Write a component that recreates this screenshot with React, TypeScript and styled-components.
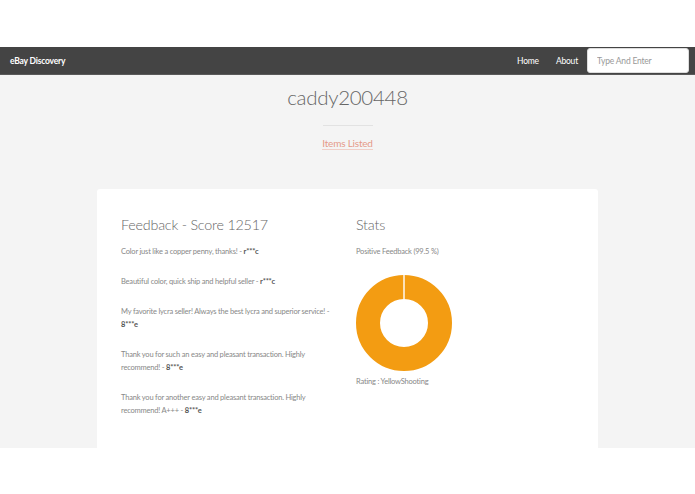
import React from "react";
import styled, { createGlobalStyle } from "styled-components";

const Global = createGlobalStyle`
  html, body { margin: 0; padding: 0; background: #ffffff; }
  body { font-family: "Lato", "Open Sans", sans-serif; color: #777; }
  * { box-sizing: border-box; }
`;

const Page = styled.div`
  padding-top: 47px;
  width: 695px;
`;

const NavBar = styled.nav`
  height: 28px;
  background: #444444;
  border-bottom: 1px solid #5a5a5a;
  display: flex;
  align-items: center;
  padding: 0 6px 0 10px;
`;

const Brand = styled.a`
  color: #ffffff;
  font-weight: 700;
  font-size: 8.5px;
  letter-spacing: -0.2px;
  flex: 1;
`;

const NavLink = styled.a<{ $gap: number }>`
  color: #ffffff;
  font-size: 8.5px;
  letter-spacing: -0.2px;
  margin-right: ${(p) => p.$gap}px;
`;

const Search = styled.input`
  width: 102px;
  height: 25px;
  border: 1px solid #dddddd;
  border-radius: 3px;
  background: #ffffff;
  padding: 0 9px;
  font-family: "Lato", sans-serif;
  font-size: 8.5px;
  letter-spacing: -0.2px;
  color: #555;
  outline: none;
  &::placeholder { color: #999999; }
`;

const Main = styled.main`
  background: #f4f4f4;
  height: 373px;
  overflow: hidden;
  display: flex;
  flex-direction: column;
  align-items: center;
`;

const Title = styled.h1`
  margin: 10px 0 0;
  font-size: 20.5px;
  font-weight: 300;
  color: #666666;
  letter-spacing: -0.3px;
  line-height: 25px;
`;

const Rule = styled.hr`
  width: 50px;
  border: 0;
  border-top: 1px solid #e2e2e2;
  margin: 15px 0 0;
`;

const ItemsLink = styled.a`
  margin-top: 11px;
  font-size: 10px;
  color: #e59a88;
  letter-spacing: -0.2px;
  border-bottom: 1px solid #f0cfc7;
  line-height: 12px;
`;

const Card = styled.section`
  margin-top: 39px;
  width: 501px;
  min-height: 320px;
  background: #ffffff;
  border-radius: 3px;
  padding: 27px 24px 0;
  display: grid;
  grid-template-columns: 235px 1fr;
`;

const Heading = styled.h2`
  margin: 0 0 11px;
  font-size: 14.3px;
  font-weight: 300;
  color: #666666;
  letter-spacing: -0.2px;
  line-height: 18px;
`;

const Column = styled.div`
  display: flex;
  flex-direction: column;
`;

const Feedback = styled.p`
  margin: 0 0 17px;
  width: 220px;
  font-size: 7.5px;
  line-height: 13px;
  color: #888888;
  letter-spacing: -0.2px;
`;

const User = styled.b`
  color: #555555;
  font-weight: 700;
`;

const Small = styled.p`
  margin: 0;
  font-size: 7.5px;
  line-height: 13px;
  color: #888888;
  letter-spacing: -0.2px;
`;

const Chart = styled.svg`
  display: block;
  margin: 17px 0 3px;
`;

const feedback = [
  ["Color just like a copper penny, thanks!", "r***c"],
  ["Beautiful color, quick ship and helpful seller", "r***c"],
  ["My favorite lycra seller! Always the best lycra and superior service!", "8***e"],
  ["Thank you for such an easy and pleasant transaction. Highly recommend!", "8***e"],
  ["Thank you for another easy and pleasant transaction. Highly recommend! A+++", "8***e"],
];

function Donut() {
  const cx = 48, cy = 48, r = 36, w = 24;
  return (
    <Chart width="97" height="97" viewBox="0 0 97 97">
      <circle cx={cx} cy={cy} r={r} fill="none" stroke="#f39c12" strokeWidth={w} />
      <line x1={cx} y1={cy - r - w / 2} x2={cx} y2={cy - r + w / 2} stroke="#ffffff" strokeWidth="1.4" />
    </Chart>
  );
}

export default function App() {
  return (
    <Page>
      <Global />
      <NavBar>
        <Brand>eBay Discovery</Brand>
        <NavLink $gap={17}>Home</NavLink>
        <NavLink $gap={9}>About</NavLink>
        <Search placeholder="Type And Enter" />
      </NavBar>
      <Main>
        <Title>caddy200448</Title>
        <Rule />
        <ItemsLink>Items Listed</ItemsLink>
        <Card>
          <Column>
            <Heading>Feedback - Score 12517</Heading>
            {feedback.map(([text, user], i) => (
              <Feedback key={i}>
                {text} - <User>{user}</User>
              </Feedback>
            ))}
          </Column>
          <Column>
            <Heading>Stats</Heading>
            <Small>Positive Feedback (99.5 %)</Small>
            <Donut />
            <Small>Rating : YellowShooting</Small>
          </Column>
        </Card>
      </Main>
    </Page>
  );
}
